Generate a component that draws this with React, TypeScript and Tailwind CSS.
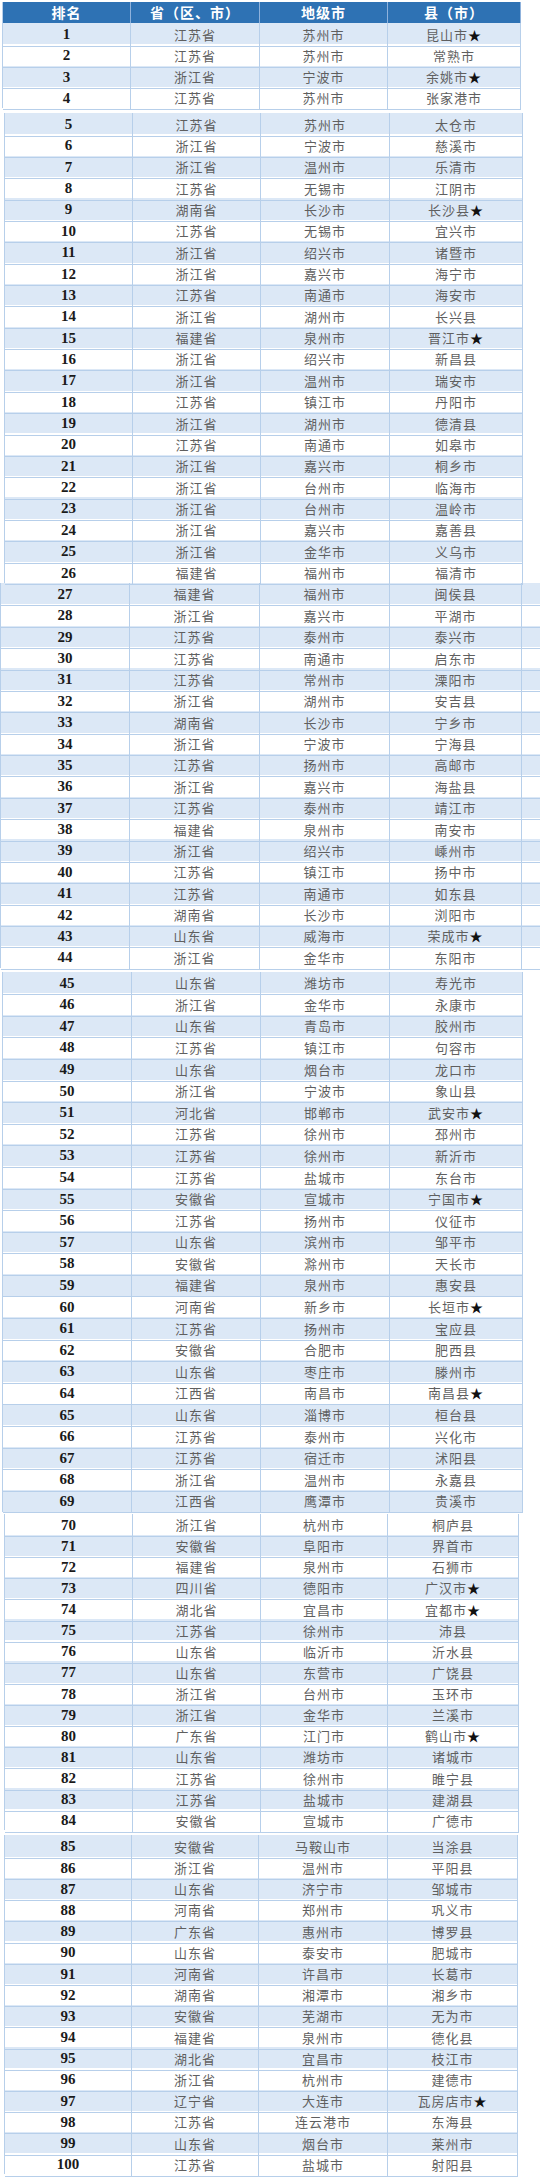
const RAW = `江苏省 苏州市 昆山市★
江苏省 苏州市 常熟市
浙江省 宁波市 余姚市★
江苏省 苏州市 张家港市
江苏省 苏州市 太仓市
浙江省 宁波市 慈溪市
浙江省 温州市 乐清市
江苏省 无锡市 江阴市
湖南省 长沙市 长沙县★
江苏省 无锡市 宜兴市
浙江省 绍兴市 诸暨市
浙江省 嘉兴市 海宁市
江苏省 南通市 海安市
浙江省 湖州市 长兴县
福建省 泉州市 晋江市★
浙江省 绍兴市 新昌县
浙江省 温州市 瑞安市
江苏省 镇江市 丹阳市
浙江省 湖州市 德清县
江苏省 南通市 如皋市
浙江省 嘉兴市 桐乡市
浙江省 台州市 临海市
浙江省 台州市 温岭市
浙江省 嘉兴市 嘉善县
浙江省 金华市 义乌市
福建省 福州市 福清市
福建省 福州市 闽侯县
浙江省 嘉兴市 平湖市
江苏省 泰州市 泰兴市
江苏省 南通市 启东市
江苏省 常州市 溧阳市
浙江省 湖州市 安吉县
湖南省 长沙市 宁乡市
浙江省 宁波市 宁海县
江苏省 扬州市 高邮市
浙江省 嘉兴市 海盐县
江苏省 泰州市 靖江市
福建省 泉州市 南安市
浙江省 绍兴市 嵊州市
江苏省 镇江市 扬中市
江苏省 南通市 如东县
湖南省 长沙市 浏阳市
山东省 威海市 荣成市★
浙江省 金华市 东阳市
山东省 潍坊市 寿光市
浙江省 金华市 永康市
山东省 青岛市 胶州市
江苏省 镇江市 句容市
山东省 烟台市 龙口市
浙江省 宁波市 象山县
河北省 邯郸市 武安市★
江苏省 徐州市 邳州市
江苏省 徐州市 新沂市
江苏省 盐城市 东台市
安徽省 宣城市 宁国市★
江苏省 扬州市 仪征市
山东省 滨州市 邹平市
安徽省 滁州市 天长市
福建省 泉州市 惠安县
河南省 新乡市 长垣市★
江苏省 扬州市 宝应县
安徽省 合肥市 肥西县
山东省 枣庄市 滕州市
江西省 南昌市 南昌县★
山东省 淄博市 桓台县
江苏省 泰州市 兴化市
江苏省 宿迁市 沭阳县
浙江省 温州市 永嘉县
江西省 鹰潭市 贵溪市
浙江省 杭州市 桐庐县
安徽省 阜阳市 界首市
福建省 泉州市 石狮市
四川省 德阳市 广汉市★
湖北省 宜昌市 宜都市★
江苏省 徐州市 沛县
山东省 临沂市 沂水县
山东省 东营市 广饶县
浙江省 台州市 玉环市
浙江省 金华市 兰溪市
广东省 江门市 鹤山市★
山东省 潍坊市 诸城市
江苏省 徐州市 睢宁县
江苏省 盐城市 建湖县
安徽省 宣城市 广德市
安徽省 马鞍山市 当涂县
浙江省 温州市 平阳县
山东省 济宁市 邹城市
河南省 郑州市 巩义市
广东省 惠州市 博罗县
山东省 泰安市 肥城市
河南省 许昌市 长葛市
湖南省 湘潭市 湘乡市
安徽省 芜湖市 无为市
福建省 泉州市 德化县
湖北省 宜昌市 枝江市
浙江省 杭州市 建德市
辽宁省 大连市 瓦房店市★
江苏省 连云港市 东海县
山东省 烟台市 莱州市
江苏省 盐城市 射阳县`;

type Row = { rank: number; province: string; city: string; county: string; star: boolean };

const ROWS: Row[] = RAW.split("\n").map((line, i) => {
  const [province, city, county] = line.trim().split(" ");
  return {
    rank: i + 1,
    province,
    city,
    county: county.replace("★", ""),
    star: county.endsWith("★"),
  };
});

// the source picture is six table clippings stacked, each a little offset
const SEGMENTS = [
  { from: 1, to: 4, header: true, filler: false, wrap: "mt-[2px] ml-[2px] w-[518px]", cols: "grid-cols-[128px_129px_128px_133px]", row: "h-[21.25px]" },
  { from: 5, to: 26, header: false, filler: false, wrap: "mt-[5px] ml-[4px] w-[518px]", cols: "grid-cols-[128px_128px_129px_133px]", row: "h-[21.36px]" },
  { from: 27, to: 44, header: false, filler: true, wrap: "mt-0 ml-0 w-[540px]", cols: "grid-cols-[129px_130px_130px_132px_19px]", row: "h-[21.39px]" },
  { from: 45, to: 69, header: false, filler: false, wrap: "mt-[4px] ml-[2px] w-[520px]", cols: "grid-cols-[129px_129px_129px_133px]", row: "h-[21.6px]" },
  { from: 70, to: 84, header: false, filler: false, wrap: "mt-[2px] ml-[4px] w-[514px]", cols: "grid-cols-[128px_128px_127px_131px]", row: "h-[21.13px]" },
  { from: 85, to: 100, header: false, filler: false, wrap: "mt-[5px] ml-[4px] w-[513px]", cols: "grid-cols-[127px_127px_129px_130px]", row: "h-[21.19px]" },
];

const cell = "flex items-center justify-center border-r border-b border-[#b7cfea]";
const cjk = "font-['Noto_Sans_CJK_SC',sans-serif] text-[13px] tracking-[1px] text-[#5f5f5f]";

function Header({ cols }: { cols: string }) {
  const titles = ["排名", "省（区、市）", "地级市", "县（市）"];
  return (
    <div className={`grid ${cols} h-[21px] bg-[#2e72b4]`}>
      {titles.map((t) => (
        <div
          key={t}
          className="flex items-center justify-center border-r border-[#8fb2dc] font-['Noto_Sans_CJK_SC',sans-serif] text-[14px] font-bold tracking-[1px] text-white"
        >
          {t}
        </div>
      ))}
    </div>
  );
}

function TableRow({ r, cols, height, filler }: { r: Row; cols: string; height: string; filler: boolean }) {
  const bg = r.rank % 2 === 1 ? "bg-[#dce8f6]" : "bg-white";
  return (
    <div className={`grid ${cols} ${height} ${bg}`}>
      <div className={`${cell} font-['Liberation_Serif',serif] text-[15px] font-bold text-[#1a1a1a]`}>{r.rank}</div>
      <div className={`${cell} ${cjk}`}>{r.province}</div>
      <div className={`${cell} ${cjk}`}>{r.city}</div>
      <div className={`${cell} ${cjk}`}>
        {r.county}
        {r.star && <span className="text-[#111]">★</span>}
      </div>
      {filler && <div className="border-b border-[#b7cfea]" />}
    </div>
  );
}

export default function App() {
  return (
    <div className="w-[540px] h-[2182px] overflow-hidden bg-white">
      {SEGMENTS.map((s) => (
        <div key={s.from} className={`${s.wrap} border-l border-[#b7cfea]`}>
          {s.header && <Header cols={s.cols} />}
          {ROWS.slice(s.from - 1, s.to).map((r) => (
            <TableRow key={r.rank} r={r} cols={s.cols} height={s.row} filler={s.filler} />
          ))}
        </div>
      ))}
    </div>
  );
}
